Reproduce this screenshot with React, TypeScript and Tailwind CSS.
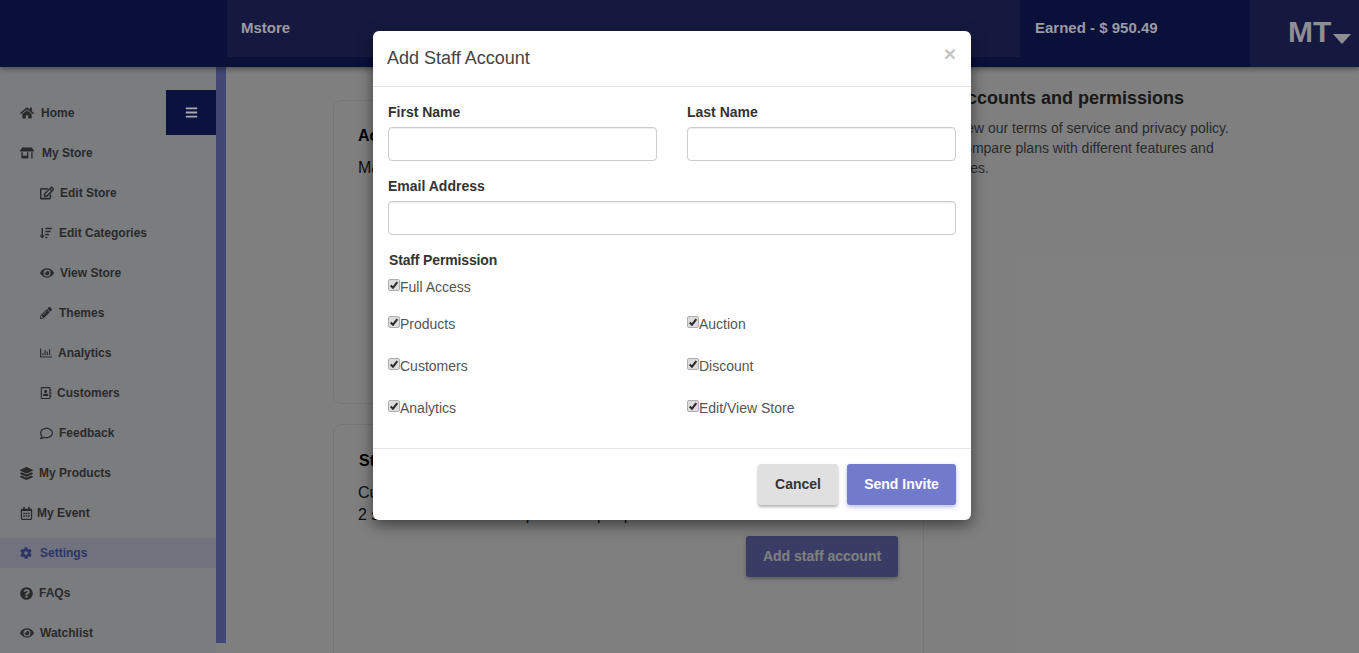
import type { IconType } from "react-icons";
import {
  FaBars,
  FaCog,
  FaEye,
  FaHome,
  FaLayerGroup,
  FaPencilAlt,
  FaQuestionCircle,
  FaRegAddressBook,
  FaRegCalendarAlt,
  FaRegChartBar,
  FaRegComment,
  FaRegEdit,
  FaSortAmountDown,
  FaStoreAlt,
} from "react-icons/fa";

interface NavItem {
  label: string;
  icon: IconType;
  indent: string;
  box: string;
  iconSize: number;
  heavy?: boolean;
  active?: boolean;
}

const navItems: NavItem[] = [
  { label: "Home", icon: FaHome, indent: "pl-5", box: "w-[21px]", iconSize: 14 },
  { label: "My Store", icon: FaStoreAlt, indent: "pl-5", box: "w-[22px]", iconSize: 14 },
  { label: "Edit Store", icon: FaRegEdit, indent: "pl-10", box: "w-[20px]", iconSize: 14, heavy: true },
  { label: "Edit Categories", icon: FaSortAmountDown, indent: "pl-10", box: "w-[19px]", iconSize: 12 },
  { label: "View Store", icon: FaEye, indent: "pl-10", box: "w-[20px]", iconSize: 14 },
  { label: "Themes", icon: FaPencilAlt, indent: "pl-10", box: "w-[19px]", iconSize: 12 },
  { label: "Analytics", icon: FaRegChartBar, indent: "pl-10", box: "w-[18px]", iconSize: 12 },
  { label: "Customers", icon: FaRegAddressBook, indent: "pl-10", box: "w-[17px]", iconSize: 12 },
  { label: "Feedback", icon: FaRegComment, indent: "pl-10", box: "w-[19px]", iconSize: 13 },
  { label: "My Products", icon: FaLayerGroup, indent: "pl-5", box: "w-[19px]", iconSize: 13 },
  { label: "My Event", icon: FaRegCalendarAlt, indent: "pl-5", box: "w-[17px]", iconSize: 13 },
  { label: "Settings", icon: FaCog, indent: "pl-5", box: "w-5", iconSize: 12, active: true },
  { label: "FAQs", icon: FaQuestionCircle, indent: "pl-5", box: "w-[19px]", iconSize: 13 },
  { label: "Watchlist", icon: FaEye, indent: "pl-5", box: "w-5", iconSize: 14 },
];

function SidebarRow({ item }: { item: NavItem }) {
  const Icon = item.icon;
  return (
    <div className="flex h-10 items-center">
      <div
        className={`flex h-[30px] w-full items-center text-xs font-bold ${item.indent} ${
          item.active ? "bg-[#e1e5fb] text-[#5b6bd0]" : "text-[#555]"
        }`}
      >
        <span className={`flex shrink-0 items-center ${item.box}`}>
          <Icon size={item.iconSize} strokeWidth={item.heavy ? 18 : 0} />
        </span>
        {item.label}
      </div>
    </div>
  );
}

function Field({ label, className = "" }: { label: string; className?: string }) {
  return (
    <div className={className}>
      <div className="mb-[5px] h-5 text-sm leading-5 font-bold text-[#333]">{label}</div>
      <input
        type="text"
        className="block h-[34px] w-full rounded border border-[#ccc] bg-white px-3 text-sm shadow-[inset_0_1px_1px_rgba(0,0,0,0.075)] outline-none"
      />
    </div>
  );
}

function Perm({ label }: { label: string }) {
  return (
    <label className="flex items-center text-sm leading-5 text-[#555]">
      <span className="-mt-[4px] flex h-[12px] w-[12px] items-center justify-center rounded-[2px] border border-[#b0b0b0] bg-[#dcdcdc]">
        <svg viewBox="0 0 12 12" className="h-[10px] w-[10px] fill-none stroke-[#2b2b2b] stroke-[2.4]">
          <path d="M2 6.5 L4.8 9.2 L10 2.6" />
        </svg>
      </span>
      {label}
    </label>
  );
}

export default function App() {
  return (
    <div className="relative h-[653px] w-full overflow-hidden bg-white font-['Liberation_Sans',Arial,sans-serif]">
      {/* Top bar sits above the backdrop, its colours are already dimmed */}
      <header className="relative z-20 flex h-[67px] bg-[#0a1039] shadow-[0_2px_5px_rgba(0,0,0,0.4)]">
        <div className="w-[227px] shrink-0" />
        <div className="flex h-[57px] w-[793px] items-center bg-[#15193f] pl-[14px] text-[15px] font-bold text-[#9b9ba3]">
          Mstore
        </div>
        <div className="flex h-[57px] w-[230px] items-center pl-[15px] text-[15px] font-bold text-[#9b9ba3]">
          Earned - $ 950.49
        </div>
        <div className="flex w-[109px] items-start bg-[#15193f] pt-[14px] pl-[38px] text-[30px] leading-9 font-bold text-[#8f8f93]">
          MT
          <svg viewBox="0 0 18 10" className="mt-[20px] ml-[2px] h-[10px] w-[18px] fill-[#8f8f93]">
            <path d="M0 0 H18 L9 10 Z" />
          </svg>
        </div>
      </header>

      <div className="relative flex">
        <aside className="h-[586px] w-[216px] shrink-0 bg-[#f6f8fd] pt-[26px]">
          {navItems.map((item) => (
            <SidebarRow key={item.label} item={item} />
          ))}
          <button className="absolute top-[23px] left-[166px] z-20 flex h-[45px] w-[50px] items-center justify-center bg-[#0c1240] text-[#a8a8b0]">
            <FaBars size={13} />
          </button>
        </aside>
        <div className="h-[576px] w-[10px] shrink-0 bg-[#848ee8]" />

        <main className="flex flex-1 items-start pt-[33px] pl-[107px]">
          <div className="w-[591px] shrink-0">
            <section className="h-[304px] rounded-lg border border-[#ebebeb] px-6 pt-[25px]">
              <h2 className="text-base leading-5 font-bold text-black">Account overview</h2>
              <p className="mt-3 text-base leading-5 text-[#222]">Manage your store account</p>
            </section>
            <section className="mt-5 h-[300px] rounded-lg border border-[#ebebeb] pt-[26px] pr-[25px] pl-6">
              <h2 className="ml-px text-base leading-5 font-bold text-black">Staff accounts</h2>
              <p className="mt-[11px] text-base leading-[22px] text-[#222]">
                Customize what your staff members can edit and access.
                <br />2 staff accounts on this plan. Add people
              </p>
              <div className="mt-[10px] flex justify-end">
                <button className="h-[41px] w-[152px] rounded-[3px] bg-[#727bcb] pb-px text-sm font-bold text-white shadow-[0_2px_4px_rgba(0,0,0,0.3)]">
                  Add staff account
                </button>
              </div>
            </section>
          </div>
          <div className="-mt-[17px] ml-[30px] w-[290px]">
            <h2 className="text-lg leading-[30px] font-bold text-[#333]">Accounts and permissions</h2>
            <p className="mt-[5px] text-sm leading-5 text-[#555]">
              View our terms of service and privacy policy.
              <br />
              Compare plans with different features and
              <br />
              rates.
            </p>
          </div>
        </main>
      </div>

      {/* Backdrop */}
      <div className="absolute inset-0 z-10 bg-black/50" />

      {/* Modal */}
      <div className="absolute top-[31px] left-[373px] z-30 h-[489px] w-[598px] rounded-md bg-white shadow-[0_5px_15px_rgba(0,0,0,0.5)]">
        <div className="relative flex h-[56px] items-center border-b border-[#e5e5e5] pl-[14px] text-lg text-[#444]">
          <span className="-mt-[2px]">Add Staff Account</span>
          <span className="absolute top-[11px] right-[15px] text-[21px] leading-6 font-bold text-[#c4c4c4]">×</span>
        </div>
        <div className="h-[361px] px-[15px] pt-[15px]">
          <div className="grid grid-cols-2 gap-x-[30px]">
            <Field label="First Name" />
            <Field label="Last Name" />
            <Field label="Email Address" className="col-span-2 mt-[15px]" />
          </div>
          <div className="mt-[15px] pl-px text-sm leading-5 font-bold tracking-[-0.15px] text-[#333]">Staff Permission</div>
          <div className="mt-[7px]">
            <Perm label="Full Access" />
          </div>
          <div className="mt-[6px] grid grid-cols-2 gap-x-[30px]">
            {["Products", "Auction", "Customers", "Discount", "Analytics", "Edit/View Store"].map((p) => (
              <div key={p} className="flex h-[42px] items-center">
                <Perm label={p} />
              </div>
            ))}
          </div>
        </div>
        <div className="flex justify-end gap-[9px] border-t border-[#e5e5e5] p-[15px]">
          <button className="h-[41px] w-20 rounded-[3px] bg-[#e0e0e0] pb-px text-sm font-bold text-[#333] shadow-[0_2px_3px_rgba(0,0,0,0.3)]">
            Cancel
          </button>
          <button className="h-[41px] w-[109px] rounded-[3px] bg-[#727bcb] pb-px text-sm font-bold text-white shadow-[0_2px_4px_rgba(114,123,203,0.5)]">
            Send Invite
          </button>
        </div>
      </div>
    </div>
  );
}
